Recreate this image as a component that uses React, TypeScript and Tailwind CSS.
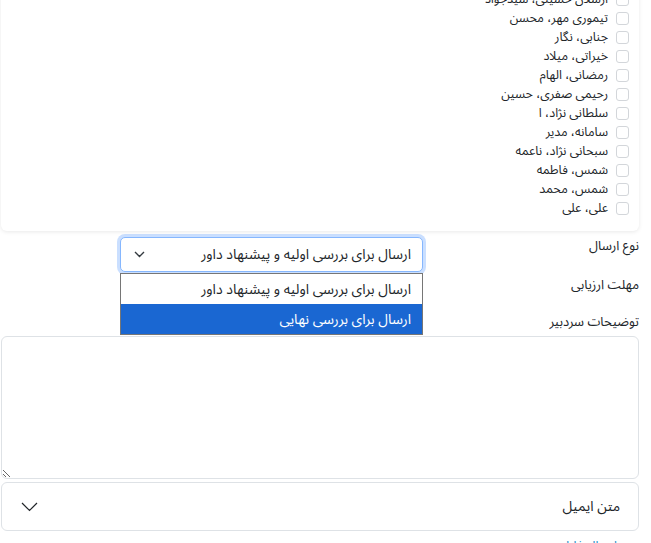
import React from "react";

const names = [
  "ارسلان حسینی، سیدجواد",
  "تیموری مهر، محسن",
  "جنابی، نگار",
  "خیراتی، میلاد",
  "رمضانی، الهام",
  "رحیمی صفری، حسین",
  "سلطانی نژاد، ا",
  "سامانه، مدیر",
  "سبحانی نژاد، ناعمه",
  "شمس، فاطمه",
  "شمس، محمد",
  "علی، علی",
];

export default function App() {
  return (
    <div
      dir="rtl"
      className="w-[651px] h-[543px] overflow-hidden bg-white text-[#212529]"
      style={{ fontFamily: '"Noto Sans Arabic", "Noto Naskh Arabic", "Noto Sans", "DejaVu Sans", sans-serif' }}
    >
      <div className="pl-[1px] pr-[12px]">
        {/* reviewer list card */}
        <div className="-mt-[10px] bg-white rounded-b-md shadow-[0_1px_4px_rgba(0,0,0,0.09)] pr-[10px] pb-[13px]">
          {names.map((n) => (
            <label key={n} className="flex items-center h-[19px] gap-[8px] text-[12.5px] leading-[19px]">
              <span className="w-[13px] h-[13px] rounded-[3px] border border-[#d3d6da] bg-white shrink-0" />
              <span>{n}</span>
            </label>
          ))}
        </div>

        {/* send type */}
        <div className="relative flex mt-[6px] h-[36px]">
          <div className="w-[216px] text-[13px] leading-[17px] pt-[1px]">نوع ارسال</div>
          <div className="relative w-[303px]">
            <div className="flex items-center justify-between h-[35px] rounded-[5px] border border-[#86b7fe] shadow-[0_0_0_3px_rgba(13,110,253,0.22)] bg-white pr-[11px] pl-[13px]">
              <span className="text-[14px]">ارسال برای بررسی اولیه و پیشنهاد داور</span>
              <svg width="11" height="7" viewBox="0 0 11 7" fill="none">
                <path d="M1 1l4.5 4.5L10 1" stroke="#343a40" strokeWidth="1.4" />
              </svg>
            </div>
            <div className="absolute top-[36px] left-0 w-[303px] border border-[#767676] bg-white z-10 text-[14px]">
              <div className="h-[30px] flex items-center pr-[11px]">ارسال برای بررسی اولیه و پیشنهاد داور</div>
              <div className="h-[30px] flex items-center pr-[11px] bg-[#1a67d2] text-white">ارسال برای بررسی نهایی</div>
            </div>
          </div>
        </div>

        {/* deadline */}
        <div className="flex h-[39px]">
          <div className="w-[216px] text-[13px] leading-[17px] pt-[4px]">مهلت ارزیابی</div>
        </div>

        {/* editor notes */}
        <div className="text-[13px] leading-[17px] pt-[2px] h-[23px]">توضیحات سردبیر</div>
        <textarea className="block w-full h-[143px] mt-[1px] rounded-[6px] border border-[#dee2e6] bg-white resize-y outline-none" />

        {/* email text accordion */}
        <div className="mt-[3px] h-[49px] rounded-[6px] border border-[#dee2e6] flex items-center justify-between pr-[18px] pl-[19px]">
          <span className="text-[14px]">متن ایمیل</span>
          <svg width="17" height="10" viewBox="0 0 17 10" fill="none">
            <path d="M1 1l7.5 7.5L16 1" stroke="#212529" strokeWidth="1.2" />
          </svg>
        </div>

        <div className="pr-[22px] pt-[6px] text-[13px] text-[#1e8fc9]">ارسال فایل</div>
      </div>
    </div>
  );
}
